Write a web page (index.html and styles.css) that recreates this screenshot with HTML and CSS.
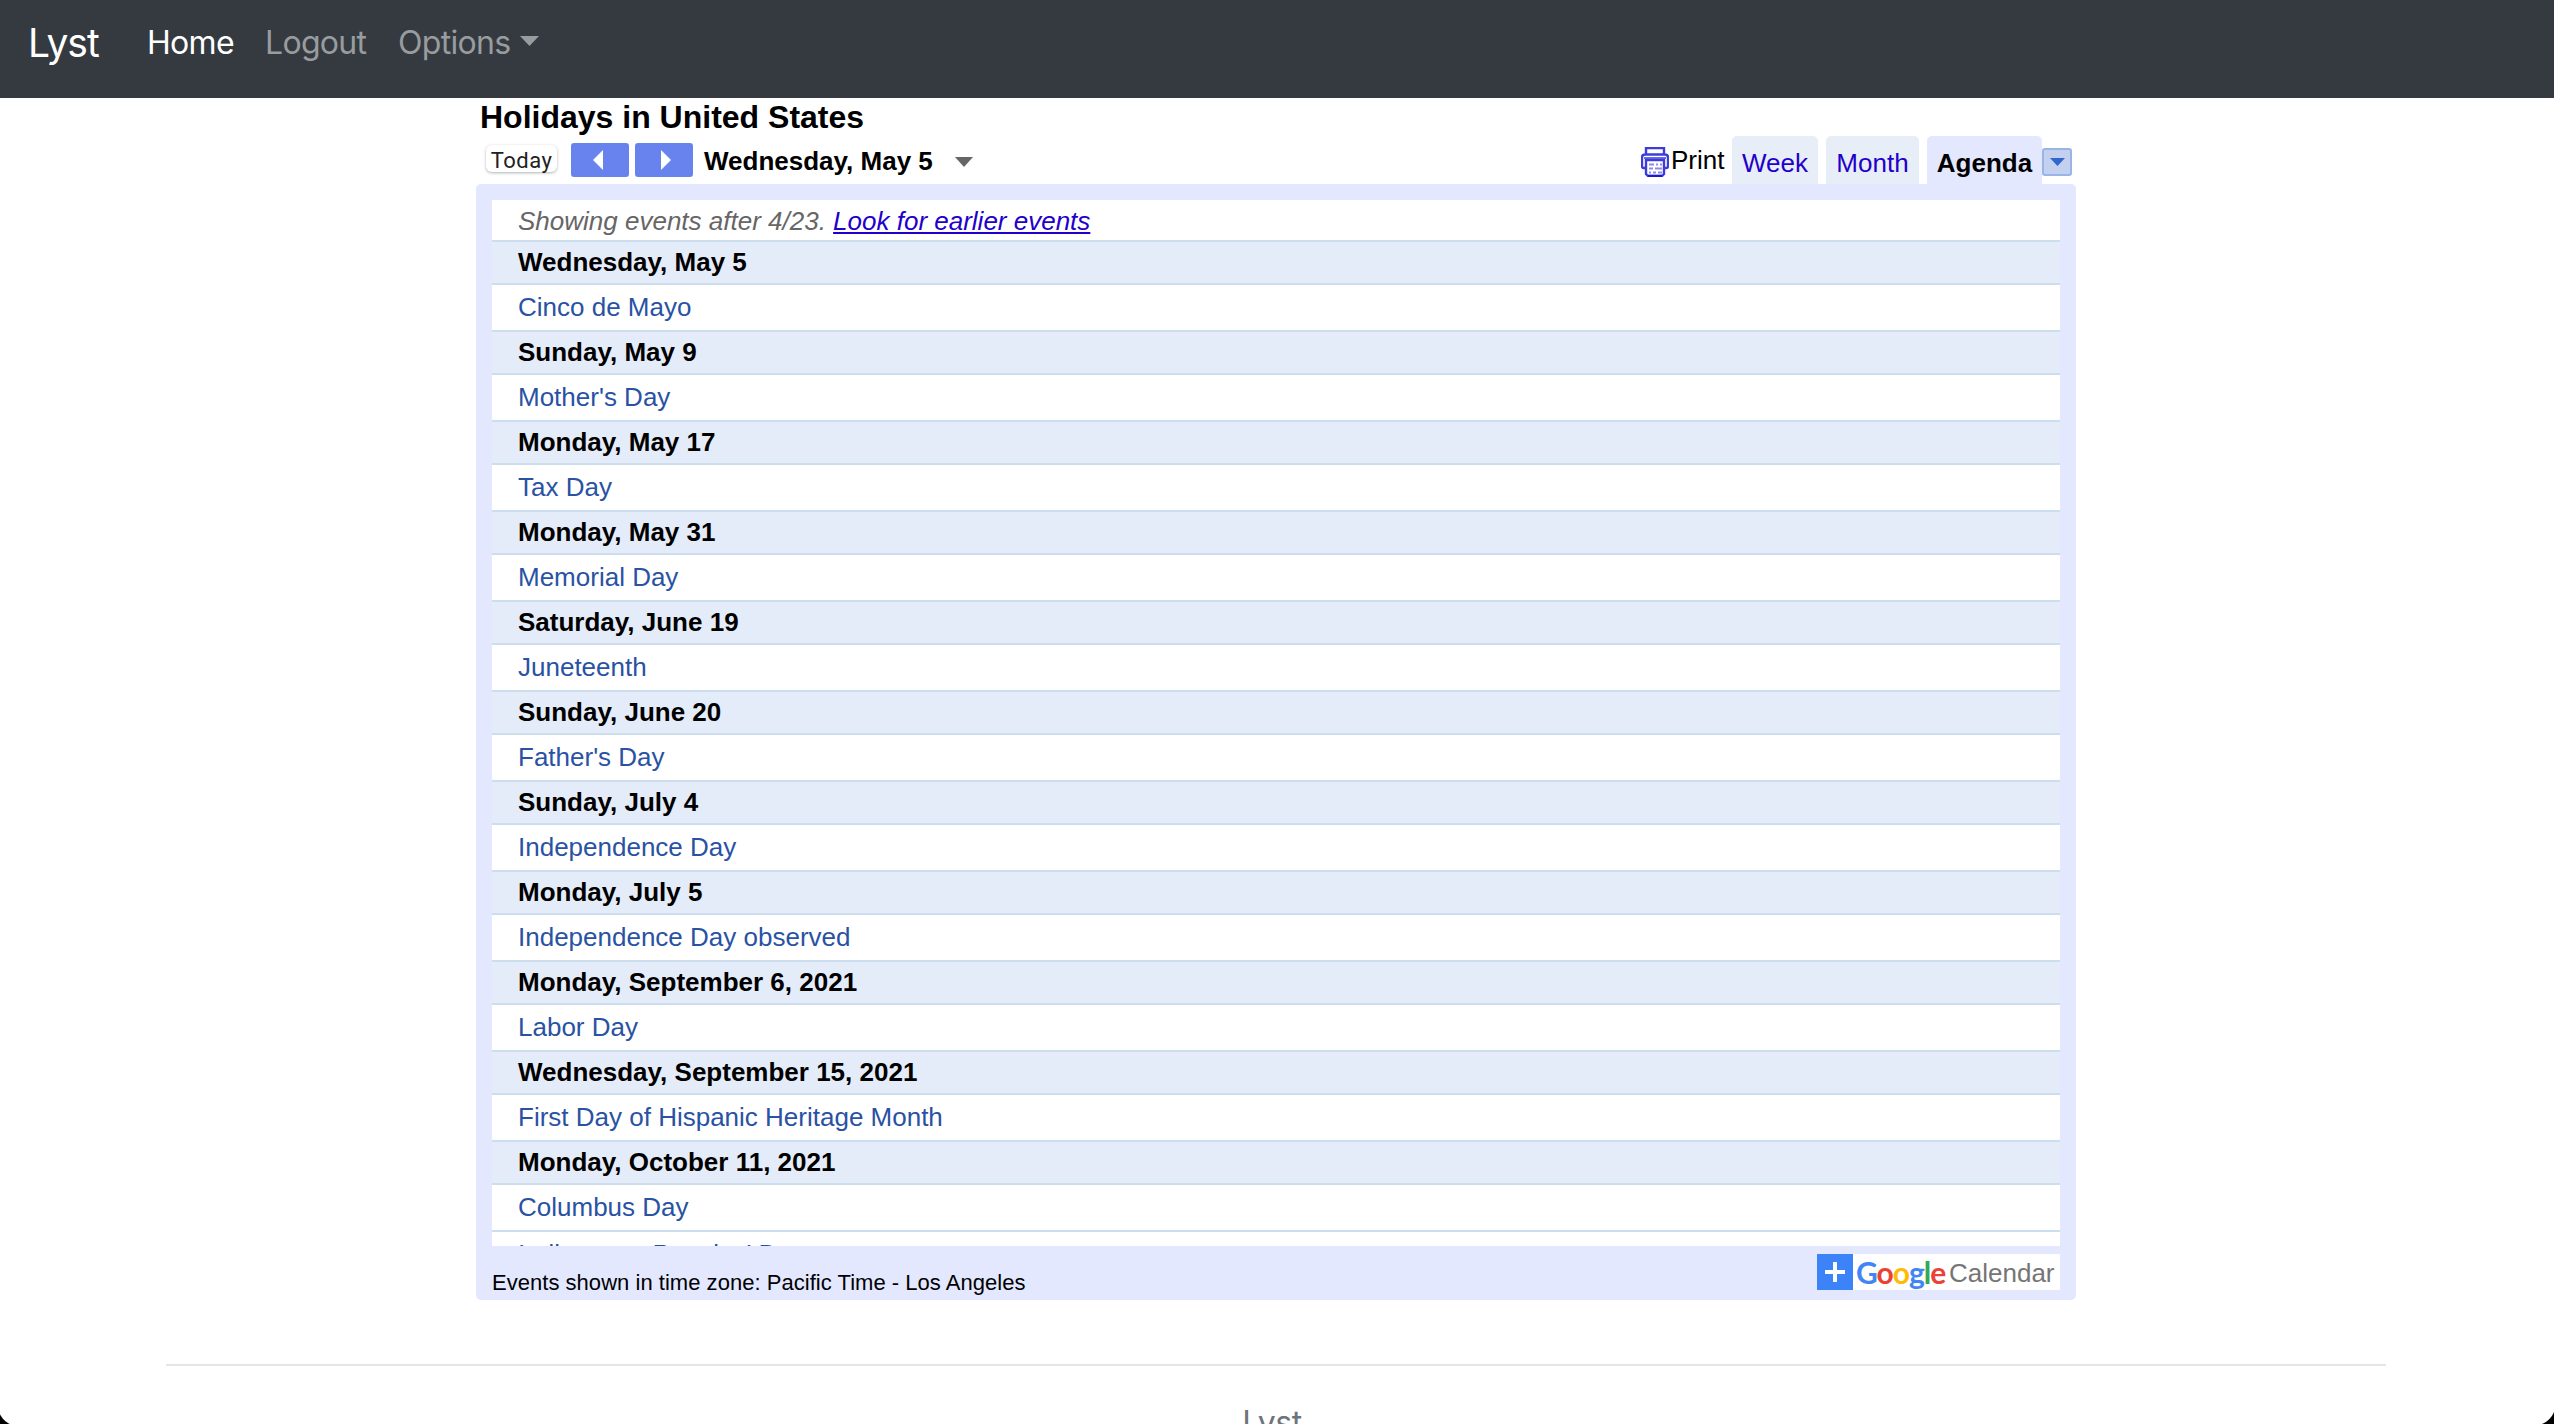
FILE: index.html
```html
<!DOCTYPE html>
<html lang="en">
<head>
<meta charset="utf-8">
<title>Lyst</title>
<link rel="stylesheet" href="styles.css">
</head>
<body>
<nav class="navbar">
  <a class="brand">Lyst</a>
  <a class="nav-link home">Home</a>
  <a class="nav-link logout">Logout</a>
  <a class="nav-link options">Options<svg class="caret" width="19" height="10" viewBox="0 0 19 10"><path d="M0 0h19L9.500 10z" fill="currentColor"/></svg></a>
</nav>
<main class="calendar">
  <h1 class="title">Holidays in United States</h1>
  <div class="toolbar">
    <div class="controls">
      <button class="today">Today</button>
      <button class="step"><svg width="58" height="34" viewBox="0 0 58 34"><path d="M32 7v20L22 17z" fill="#fff"/></svg></button>
      <button class="step"><svg width="58" height="34" viewBox="0 0 58 34"><path d="M26 7v20l10-10z" fill="#fff"/></svg></button>
      <span class="date">Wednesday, May 5</span>
      <svg class="date-arrow" width="18" height="10" viewBox="0 0 18 10"><path d="M0 0h18l-9 10z" fill="#666"/></svg>
    </div>
    <div class="views">
      <svg class="printer" width="28" height="30" viewBox="0 0 28 30" fill="none" stroke="#3c3cdc" stroke-width="2.400">
        <path d="M5 7V1h18v6M5 21H2.500Q1 21 1 19V10.500Q1 7.500 4 7.500h20q3 0 3 3V19q0 2-1.500 2H23"/>
        <path d="M5 13h18v14l-2 2H7l-2-2z"/>
        <path d="M3 11h22" stroke-width="1.500"/>
        <path d="M8 17.500h5m2 0h2m2 0h2M8 21.500h4m2 0h7M8 25.500h2m2 0h3m2 0h4" stroke="#8b8be8" stroke-width="2"/>
        <path d="M7 29h14" stroke="#1a1acc"/>
      </svg>
      <span class="print">Print</span>
      <a class="tab week">Week</a>
      <a class="tab month">Month</a>
      <a class="tab agenda">Agenda</a>
      <button class="more"><svg width="15" height="8" viewBox="0 0 15 8"><path d="M0 0h15L7.500 8z" fill="#3366cc"/></svg></button>
    </div>
  </div>
  <section class="panel">
    <div class="events">
      <p class="notice">Showing events after 4/23. <a>Look for earlier events</a></p>
      <h2 class="day">Wednesday, May 5</h2><p class="event">Cinco de Mayo</p>
      <h2 class="day">Sunday, May 9</h2><p class="event">Mother's Day</p>
      <h2 class="day">Monday, May 17</h2><p class="event">Tax Day</p>
      <h2 class="day">Monday, May 31</h2><p class="event">Memorial Day</p>
      <h2 class="day">Saturday, June 19</h2><p class="event">Juneteenth</p>
      <h2 class="day">Sunday, June 20</h2><p class="event">Father's Day</p>
      <h2 class="day">Sunday, July 4</h2><p class="event">Independence Day</p>
      <h2 class="day">Monday, July 5</h2><p class="event">Independence Day observed</p>
      <h2 class="day">Monday, September 6, 2021</h2><p class="event">Labor Day</p>
      <h2 class="day">Wednesday, September 15, 2021</h2><p class="event">First Day of Hispanic Heritage Month</p>
      <h2 class="day">Monday, October 11, 2021</h2><p class="event">Columbus Day</p>
      <p class="event">Indigenous Peoples' Day</p>
    </div>
    <div class="panel-foot">
      <span class="zone">Events shown in time zone: Pacific Time - Los Angeles</span>
      <a class="gcal">
        <svg width="36" height="36" viewBox="0 0 36 36"><path fill="#3c82f8" d="M0 0h36v36H0z"/><path d="M8 18h20M18 8v20" stroke="#fff" stroke-width="4"/></svg>
        <span class="google"><span class="blue">G</span><span class="red">o</span><span class="yellow">o</span><span class="blue">g</span><span class="green">l</span><span class="red">e</span></span>
        <span class="gcal-name">Calendar</span>
      </a>
    </div>
  </section>
</main>
<footer class="footer">Lyst</footer>
<i class="corner left"></i><i class="corner right"></i>
</body>
</html>
```
FILE: styles.css
```css
* { box-sizing: border-box; }
html, body { height: 100%; }
body { margin: 0; overflow: hidden; background: #fff; font-family: "Liberation Sans", Arial, sans-serif; color: #000; }
h1, h2, p { margin: 0; }
button { border: 0; padding: 0; }

.navbar { display: flex; height: 98px; padding: 13px 28px; background: #343a40; font-family: Inter, sans-serif; line-height: 60px; }
.brand { width: 119px; font-size: 39px; letter-spacing: -1px; color: #fff; }
.nav-link { font-size: 32px; letter-spacing: -.7px; color: #999c9f; }
.home { width: 118px; color: #fff; }
.logout { width: 133px; }
.options { display: flex; }
.caret { margin: 23px 0 0 10px; }

.calendar { width: 1600px; margin-left: 476px; }
.title { height: 38px; padding-left: 4px; font-size: 32px; line-height: 38px; }
.toolbar { display: flex; justify-content: space-between; height: 48px; padding-right: 4px; }
.controls { display: flex; padding: 7px 0 0 10px; }
.today { width: 71px; height: 27px; margin: 2px 14px 0 0; border-radius: 6px; background: #fff; box-shadow: 0 1px 3px rgba(60, 64, 67, .4); font: 22px/32px Roboto, sans-serif; letter-spacing: .5px; color: #222; }
.step { width: 58px; height: 34px; margin-right: 6px; border-radius: 3px; background: #6883ee; overflow: hidden; }
.step svg, .more svg { display: block; }
.date { width: 244px; margin-left: 5px; font-size: 26px; font-weight: bold; line-height: 36px; white-space: nowrap; }
.date-arrow { margin: 14px 0 0 7px; }
.views { display: flex; font-size: 26px; }
.printer { margin: 11px 0 0; }
.print { width: 63px; padding-left: 2px; line-height: 48px; }
.tab { height: 48px; border-radius: 5px 5px 0 0; line-height: 55px; text-align: center; background: #e8eef7; color: #20c; }
.week { width: 86px; }
.month { width: 93px; margin: 0 8px; }
.agenda { width: 115px; background: #e3e8ff; color: #000; font-weight: bold; }
.more { display: grid; place-items: center; width: 30px; height: 28px; margin-top: 12px; border: 2px solid #9ab4e6; border-radius: 3px; background: #c3d0f0; }

.panel { height: 1116px; padding: 16px 16px 0; border-radius: 5px; background: #e3e8ff; }
.events { height: 1046px; overflow: hidden; background: #fff; font-size: 26px; }
.notice { height: 40px; padding-left: 26px; line-height: 43px; font-style: italic; color: #666; }
.notice a { color: #20c; text-decoration: underline; }
.day, .event { padding-left: 26px; border-top: 2px solid #cde; white-space: nowrap; }
.day { height: 43px; font-size: 26px; line-height: 41px; background: #e4ecf9; }
.event { height: 47px; line-height: 45px; color: #2952a3; }
.panel-foot { display: flex; justify-content: space-between; padding-top: 8px; }
.zone { padding-top: 16px; font-size: 22px; letter-spacing: .03px; line-height: 26px; }
.gcal { display: flex; width: 243px; height: 36px; background: #fff; white-space: nowrap; }
.google { width: 93px; margin-left: 3px; font: bold 30px/37px Lato, sans-serif; letter-spacing: -1px; }
.blue { color: #4285f4; } .red { color: #ea4335; } .yellow { color: #fbbc05; } .green { color: #34a853; }
.gcal-name { font-size: 26px; line-height: 38px; color: #757575; }

.footer { width: 2220px; margin: 64px 0 0 166px; padding: 33px 8px 0 0; border-top: 2px solid #e5e5e5; font: 32px/48px Inter, sans-serif; letter-spacing: -.5px; text-align: center; color: #6c757d; }

.corner { position: absolute; bottom: 0; width: 20px; height: 20px; }
.left { left: 0; background: radial-gradient(circle at 100% 0, transparent 22px, #000 23px); }
.right { right: 0; background: radial-gradient(circle at 0 0, transparent 21px, #000 22px); }
```
